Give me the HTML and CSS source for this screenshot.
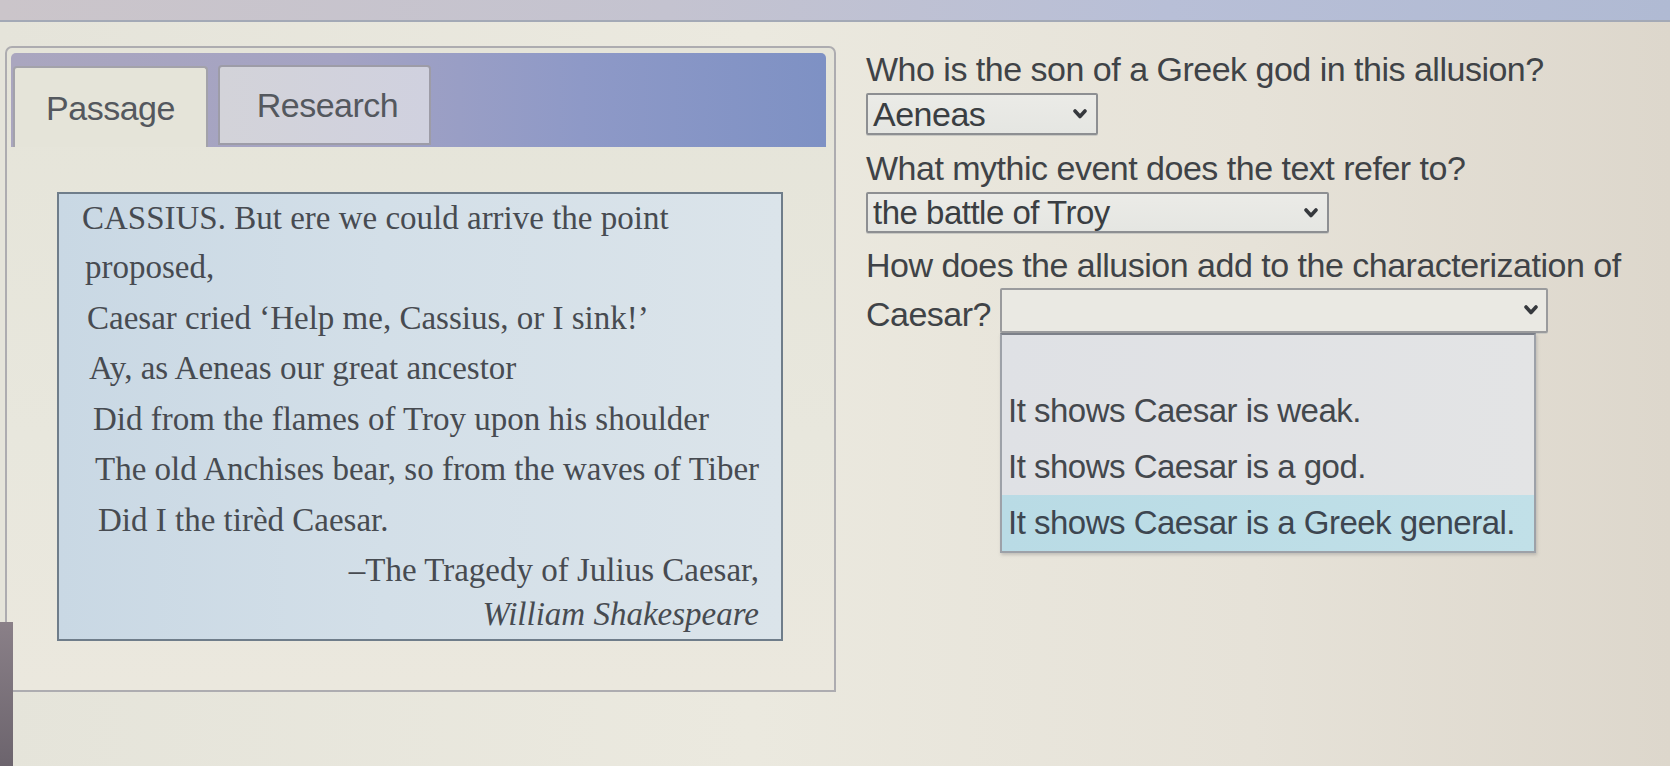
FILE: index.html
```html
<!DOCTYPE html>
<html lang="en">
<head>
<meta charset="utf-8">
<title>Passage</title>
<link rel="stylesheet" href="styles.css">
</head>
<body>
<div class="topbar"></div>
<div class="page">
  <section class="panel">
    <div class="tabbar">
      <div class="tab tab-active">Passage</div>
      <div class="tab tab-idle">Research</div>
    </div>
    <div class="panel-body">
      <div class="quote">
        <p class="line l1">CASSIUS. But ere we could arrive the point</p>
        <p class="line l2">proposed,</p>
        <p class="line l3">Caesar cried ‘Help me, Cassius, or I sink!’</p>
        <p class="line l4">Ay, as Aeneas our great ancestor</p>
        <p class="line l5">Did from the flames of Troy upon his shoulder</p>
        <p class="line l6">The old Anchises bear, so from the waves of Tiber</p>
        <p class="line l7">Did I the tirèd Caesar.</p>
        <p class="line cite">–The Tragedy of Julius Caesar,</p>
        <p class="line cite author">William Shakespeare</p>
      </div>
    </div>
  </section>

  <section class="questions">
    <p class="q q1">Who is the son of a Greek god in this allusion?</p>
    <div class="select sel1"><span>Aeneas</span><svg class="chev" viewBox="0 0 14 10" width="14" height="10"><polyline points="2,2 7,7.5 12,2" /></svg></div>
    <p class="q q2">What mythic event does the text refer to?</p>
    <div class="select sel2"><span>the battle of Troy</span><svg class="chev" viewBox="0 0 14 10" width="14" height="10"><polyline points="2,2 7,7.5 12,2" /></svg></div>
    <p class="q q3">How does the allusion add to the characterization of Caesar? <span class="sel-wrap"><span class="select sel3"><span></span><svg class="chev" viewBox="0 0 14 10" width="14" height="10"><polyline points="2,2 7,7.5 12,2" /></svg></span><span class="dropdown"><span class="opt opt-empty"></span><span class="opt">It shows Caesar is weak.</span><span class="opt">It shows Caesar is a god.</span><span class="opt opt-hl">It shows Caesar is a Greek general.</span></span></span></p>
  </section>
</div>
<div class="bezel"></div>
</body>
</html>
```

FILE: styles.css
```css
* { box-sizing: border-box; }

html, body {
  margin: 0;
  padding: 0;
  height: 100%;
}

body {
  position: relative;
  width: 1670px;
  height: 766px;
  overflow: hidden;
  background: linear-gradient(90deg, #e5e4da 0%, #ebe9df 45%, #e6e2d8 75%, #ddd7cc 100%);
  font-family: "Liberation Sans", Arial, sans-serif;
  color: #3f4347;
}

.topbar {
  height: 22px;
  background: linear-gradient(90deg, #cbc5ca 0%, #c4c3d0 40%, #b8bfd7 70%, #b0bad3 100%);
  border-bottom: 2px solid #a3a9b6;
}

.page {
  display: flex;
  align-items: flex-start;
}

/* ---------- left panel ---------- */
.panel {
  margin: 24px 0 0 5px;
  width: 831px;
  height: 646px;
  border: 2px solid #adacb0;
  border-radius: 7px 7px 0 0;
  background: linear-gradient(180deg, #e5e4d9 0%, #e8e7dd 60%, #ebe8de 100%);
  display: flex;
  flex-direction: column;
}

.tabbar {
  margin: 5px 8px 0 4px;
  height: 94px;
  border-radius: 5px 5px 0 0;
  background: linear-gradient(90deg, #aaa6bf 0%, #a4a3c3 40%, #8e99c7 70%, #7e91c4 100%);
  display: flex;
  align-items: flex-end;
  gap: 10px;
  padding-left: 2px;
}

.tab {
  font-size: 34px;
  letter-spacing: -0.5px;
  color: #54585e;
  display: flex;
  align-items: center;
  justify-content: center;
  border: 2px solid #9d9ca7;
  border-bottom: none;
  border-radius: 4px 4px 0 0;
}

.tab-active {
  width: 195px;
  height: 81px;
  background: #e5e4d9;
  border-color: #a3a2aa;
  padding-top: 2px;
}

.tab-idle {
  width: 213px;
  height: 80px;
  margin-bottom: 2px;
  background: linear-gradient(90deg, #d3d3d9 0%, #d0d1df 100%);
  border-bottom: 2px solid #9d9ca7;
  padding-left: 6px;
}

.panel-body {
  padding: 45px 0 0 50px;
}

.quote {
  width: 726px;
  border: 2px solid #6f7d8a;
  background: linear-gradient(90deg, #c9d8e4 0%, #d3dfe8 45%, #dbe4ea 100%);
  padding: 0 22px 7px 23px;
  font-family: "Liberation Serif", "Times New Roman", serif;
  font-size: 33px;
  color: #474b51;
}

.line {
  margin: 0;
  line-height: 50.5px;
  white-space: nowrap;
}

.l1 { line-height: 48px; }
.l2 { padding-left: 3px; }
.l3 { padding-left: 5px; }
.l4 { padding-left: 7px; }
.l5 { padding-left: 11px; }
.l6 { padding-left: 13px; }
.l7 { padding-left: 16px; }

.cite {
  text-align: right;
}

.author {
  font-style: italic;
  line-height: 36px;
}

/* ---------- right column ---------- */
.questions {
  padding: 27px 0 0 30px;
  width: 810px;
}

.q {
  margin: 0;
  font-size: 34px;
  letter-spacing: -0.5px;
  line-height: 40px;
  white-space: nowrap;
}

.q2 { margin-top: 13px; }

.q3 {
  margin-top: 8px;
  white-space: normal;
  line-height: 49px;
  width: 790px;
}

.select {
  display: flex;
  align-items: center;
  justify-content: space-between;
  border: 2px solid #8d8f92;
  border-radius: 2px;
  background: linear-gradient(180deg, #ebebe7 0%, #e5e6e2 100%);
  color: #3a3e42;
  padding: 0 9px 0 5px;
  box-shadow: 0 1px 0 #c9c9c4;
  letter-spacing: -0.5px;
}

.sel1 {
  margin-top: 4px;
  width: 232px;
  height: 42px;
  font-size: 34px;
}

.sel2 {
  margin-top: 4px;
  width: 463px;
  height: 41px;
  font-size: 33px;
}

.chev {
  fill: none;
  stroke: #36393d;
  stroke-width: 3.6;
  stroke-linecap: round;
  stroke-linejoin: round;
  flex: none;
}

.sel-wrap {
  position: relative;
  top: -7px;
  display: inline-block;
  vertical-align: middle;
}

.sel3 {
  width: 548px;
  height: 45px;
  background: #eae9e3;
  border-color: #9a9b9d;
  padding-right: 8px;
}

.dropdown {
  position: absolute;
  top: 100%;
  left: 0;
  width: 536px;
  display: flex;
  flex-direction: column;
  border: 2px solid #9da1a8;
  border-top: 2px solid #7c8089;
  background: linear-gradient(90deg, #dfe1e5 0%, #e3e4e5 100%);
  box-shadow: 1px 2px 3px rgba(120, 120, 120, 0.35);
}

.opt {
  display: block;
  height: 56px;
  line-height: 56px;
  padding-left: 6px;
  font-size: 33px;
  letter-spacing: -0.5px;
  color: #44484d;
  white-space: nowrap;
}

.opt-empty {
  height: 48px;
}

.opt-hl {
  background: linear-gradient(90deg, #b9dbe5 0%, #c1e0e8 100%);
  color: #3d4650;
}

/* photo edge: dark monitor bezel at bottom-left */
.bezel {
  position: absolute;
  left: 0;
  top: 622px;
  width: 13px;
  height: 144px;
  background: linear-gradient(180deg, #8a8088 0%, #6c646d 100%);
}
```
